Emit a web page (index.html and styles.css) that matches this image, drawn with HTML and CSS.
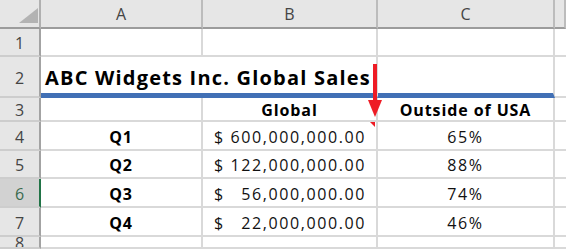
FILE: index.html
```html
<!DOCTYPE html>
<html>
<head>
<meta charset="utf-8">
<link rel="stylesheet" href="styles.css">
</head>
<body>
<div class="sheet">
  <div class="corner"><svg class="corner-tri" width="41" height="29" viewBox="0 0 41 29"><polygon points="38,8 38,23 19,23" fill="#b3b3b3"/></svg></div>
  <div class="colhead">A</div>
  <div class="colhead">B</div>
  <div class="colhead">C</div>
  <div class="colhead last"></div>

  <div class="rowhead">1</div>
  <div class="cell"></div>
  <div class="cell"></div>
  <div class="cell"></div>
  <div class="cell last"></div>

  <div class="rowhead">2</div>
  <div class="cell title blue">ABC Widgets Inc. Global Sales</div>
  <div class="cell blue"></div>
  <div class="cell last"></div>

  <div class="rowhead">3</div>
  <div class="cell"></div>
  <div class="cell center bold">Global</div>
  <div class="cell center bold">Outside of USA</div>
  <div class="cell last"></div>

  <div class="rowhead">4</div>
  <div class="cell center bold">Q1</div>
  <div class="cell money"><span>$</span><span>600,000,000.00</span><i class="comment"></i></div>
  <div class="cell center">65%</div>
  <div class="cell last"></div>

  <div class="rowhead">5</div>
  <div class="cell center bold">Q2</div>
  <div class="cell money"><span>$</span><span>122,000,000.00</span></div>
  <div class="cell center">88%</div>
  <div class="cell last"></div>

  <div class="rowhead selected">6</div>
  <div class="cell center bold">Q3</div>
  <div class="cell money"><span>$</span><span>56,000,000.00</span></div>
  <div class="cell center">74%</div>
  <div class="cell last"></div>

  <div class="rowhead">7</div>
  <div class="cell center bold">Q4</div>
  <div class="cell money"><span>$</span><span>22,000,000.00</span></div>
  <div class="cell center">46%</div>
  <div class="cell last"></div>

  <div class="rowhead">8</div>
  <div class="cell"></div>
  <div class="cell"></div>
  <div class="cell"></div>
  <div class="cell last"></div>

  <svg class="arrow" width="20" height="60" viewBox="0 0 20 60">
    <rect x="7" y="0" width="4" height="40" fill="#ee1c25"/>
    <polygon points="2,36 16,36 9,53" fill="#ee1c25"/>
  </svg>
</div>
</body>
</html>
```
FILE: styles.css
```css
html, body {
  margin: 0;
  padding: 0;
  background: #ffffff;
}
body {
  width: 566px;
  height: 249px;
  overflow: hidden;
  font-family: "Open Sans", "Noto Sans", sans-serif;
}
.sheet {
  position: relative;
  display: grid;
  grid-template-columns: 41px 162px 175px 177px 1fr;
  grid-template-rows: 29px 28px 41px 24px 29px 28px 29px 29px 1fr;
  width: 566px;
  height: 249px;
}
.corner {
  background: #e6e6e6;
  border-right: 2px solid #b0b0b0;
  border-bottom: 2px solid #9c9c9c;
  box-sizing: border-box;
  position: relative;
}
.corner-tri {
  position: absolute;
  left: 0;
  top: 0;
}
.colhead {
  background: #e6e6e6;
  border-right: 2px solid #bcbcbc;
  border-bottom: 2px solid #9c9c9c;
  box-sizing: border-box;
  display: flex;
  align-items: center;
  justify-content: center;
  font-size: 16px;
  color: #444444;
  padding-top: 1px;
}
.rowhead {
  background: #e6e6e6;
  border-right: 2px solid #a3a3a3;
  border-bottom: 2px solid #cdcdcd;
  box-sizing: border-box;
  display: flex;
  align-items: center;
  justify-content: center;
  font-size: 16px;
  color: #444444;
  padding-top: 2px;
  overflow: hidden;
}
.rowhead.selected {
  background: #d2d2d2;
  color: #3a6a4e;
  border-right-color: #217346;
}
.cell {
  border-right: 2px solid #d9d9d9;
  border-bottom: 2px solid #d9d9d9;
  box-sizing: border-box;
  display: flex;
  align-items: center;
  font-size: 16px;
  letter-spacing: 1.6px;
  color: #111111;
  padding-top: 2px;
  white-space: nowrap;
  position: relative;
}
.cell.last {
  border-right: none;
}
.cell.blue {
  border-bottom: 5px solid #4170b5;
}
.title {
  grid-column: span 2;
  font-size: 20px;
  font-weight: 700;
  letter-spacing: 1.2px;
  padding-left: 4px;
  padding-top: 4px;
  color: #000000;
}
.center {
  justify-content: center;
}
.bold {
  font-weight: 700;
  letter-spacing: 0.9px;
  color: #000000;
}
.money {
  justify-content: space-between;
  padding-left: 11px;
  padding-right: 10px;
}
.comment {
  position: absolute;
  right: 1px;
  top: 0;
  width: 0;
  height: 0;
  border-top: 5px solid #ee1c25;
  border-left: 5px solid transparent;
}
.arrow {
  position: absolute;
  left: 366px;
  top: 64px;
}
```
